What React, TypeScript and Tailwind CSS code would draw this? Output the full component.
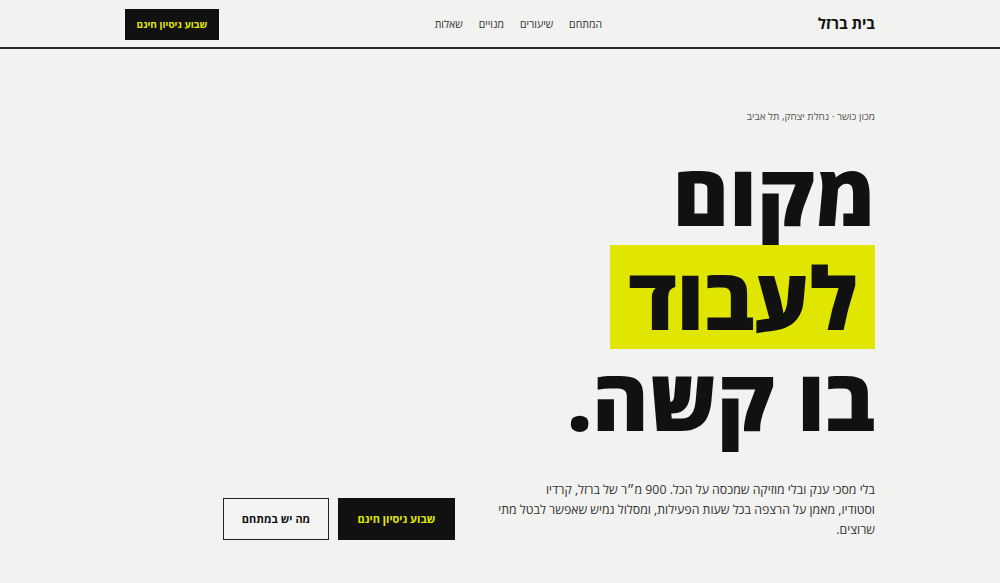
const body = { fontFamily: '"Open Sans", "Liberation Sans", Arial, sans-serif' };

const navItems = ['המתחם', 'שיעורים', 'מנויים', 'שאלות'];

export default function App() {
  return (
    <div dir="rtl" className="min-h-screen bg-[#f2f2f0] text-[#111]" style={body}>
      {/* Header */}
      <header className="border-b-2 border-[#2a2a2a]">
        <div className="mx-auto flex h-[47px] w-[750px] items-center justify-between">
          <div className="text-[15px] font-bold">בית ברזל</div>
          <nav className="mt-[2px] flex gap-[16px] text-[10.5px] text-[#333]">
            {navItems.map((item) => (
              <a key={item} href="#" className="hover:text-black">
                {item}
              </a>
            ))}
          </nav>
          <button className="mt-[1px] h-[31px] w-[94px] bg-[#111] text-[10px] font-bold text-[#e0e600]">
            שבוע ניסיון חינם
          </button>
        </div>
      </header>

      {/* Hero */}
      <main className="mx-auto w-[750px] pt-[60px]">
        <p className="text-[10px] text-[#555]">מכון כושר · נחלת יצחק, תל אביב</p>

        <h1 className="mt-[17px] text-[86px] font-extrabold leading-[104px]">
          <span className="block">מקום</span>
          <span className="inline-block bg-[#e0e600] pl-[19px] pr-[18px]">לעבוד</span>
          <span className="mt-[-3px] block">בו קשה.</span>
        </h1>

        <div className="mt-[30px] flex items-start gap-[40px]">
          <p className="w-[380px] whitespace-nowrap text-[12.3px] leading-[20px] text-[#333]">
            בלי מסכי ענק ובלי מוזיקה שמכסה על הכל. 900 מ״ר של ברזל, קרדיו
            <br />
            וסטודיו, מאמן על הרצפה בכל שעות הפעילות, ומסלול גמיש שאפשר לבטל מתי
            <br />
            שרוצים.
          </p>
          <div className="mt-[18px] flex gap-[9px]">
            <button className="h-[42px] w-[117px] bg-[#111] text-[11px] font-bold text-[#e0e600]">
              שבוע ניסיון חינם
            </button>
            <button className="h-[42px] w-[106px] border border-[#222] bg-[#f4f4f2] text-[11px] font-bold text-[#111]">
              מה יש במתחם
            </button>
          </div>
        </div>
      </main>
    </div>
  );
}
